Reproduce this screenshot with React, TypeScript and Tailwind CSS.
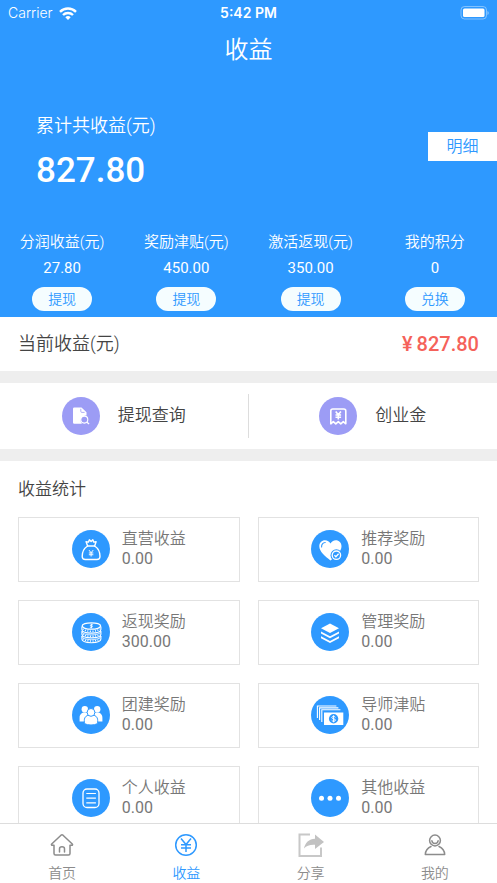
import React from 'react';

type IconProps = { className?: string };

const YuanMark = ({ x, y, s = 1 }: { x: number; y: number; s?: number }) => (
  <g transform={`translate(${x} ${y}) scale(${s})`} fill="none" stroke="currentColor">
    <path d="M-2.6 -4 L0 -0.6 L2.6 -4 M0 -0.6 V4 M-2.8 -0.4 H2.8 M-2.8 1.8 H2.8" />
  </g>
);

const QueryIcon = () => (
  <svg viewBox="0 0 38 38" className="size-[38px]">
    <circle cx="19" cy="19" r="19" fill="#9c9cf5" />
    <path d="M12.3 10.5h7.2l5 4.8v3.2a5 5 0 0 0-4.5 8.3h-7.7a1.3 1.3 0 0 1-1.3-1.3V11.8a1.3 1.3 0 0 1 1.3-1.3z" fill="#fff" />
    <path d="M18.8 11.8v2.6q0 1 1 1h2.8" fill="none" stroke="#9c9cf5" strokeWidth=".8" />
    <circle cx="22.3" cy="22.6" r="3.5" fill="none" stroke="#fff" strokeWidth="1.1" />
    <path d="M24.9 25.2l2.2 1.9" stroke="#fff" strokeWidth="1.3" />
  </svg>
);

const ReceiptIcon = () => (
  <svg viewBox="0 0 38 38" className="size-[38px] text-white">
    <circle cx="19" cy="19" r="19" fill="#9c9cf5" />
    <path
      d="M11.8 26.8V14a2 2 0 0 1 2-2h11a2 2 0 0 1 2 2v12.8l-2.5-2.2-2.5 2.2-2.5-2.2-2.5 2.2-2.5-2.2z"
      fill="none"
      stroke="#fff"
      strokeWidth="1.6"
      strokeLinejoin="round"
    />
    <g strokeWidth="1.6">
      <YuanMark x={19.3} y={18.4} />
    </g>
  </svg>
);

const Disc = ({ children }: { children: React.ReactNode }) => (
  <svg viewBox="0 0 38 38" className="size-[38px] shrink-0 text-white">
    <circle cx="19" cy="19" r="19" fill="#2e99ff" />
    {children}
  </svg>
);

const BagIcon = () => (
  <Disc>
    <g fill="none" stroke="#fff" strokeWidth="1.4" strokeLinejoin="round" strokeLinecap="round">
      <path d="M15.6 16C11.8 18.5 10.2 22.5 10.2 26.3c0 2.3 1 3.2 3.2 3.2h11.4c2.2 0 3.2-.9 3.2-3.2 0-3.8-1.6-7.8-5.4-10.3z" />
      <path d="M15.6 16l-1.5-4.3 2.3.4 1-2.3 1.7 1.7 1.7-1.7 1 2.3 2.3-.4-1.5 4.3" />
    </g>
    <g strokeWidth="1.2">
      <YuanMark x={19.1} y={23.3} s={0.8} />
    </g>
  </Disc>
);

const HeartIcon = () => (
  <Disc>
    <path d="M19.5 30.5C14 26 8.3 21.5 8.3 16.2c0-3.5 2.5-6 5.7-6 2.4 0 4.5 1.3 5.5 3.2 1-1.9 2.9-3.2 5.3-3.2 3.2 0 5.7 2.5 5.7 6 0 5.3-5.5 9.800-11 14.300z" fill="#fff" />
    <path d="M10.6 17c-.2-2.6 1.300-4.400 3.600-4.500" fill="none" stroke="#2e99ff" strokeWidth="1.1" strokeLinecap="round" />
    <circle cx="25.4" cy="25.2" r="5.9" fill="#2e99ff" />
    <circle cx="25.4" cy="25.2" r="4.2" fill="none" stroke="#fff" strokeWidth="1.3" />
    <path d="M23.4 25.3l1.500 1.500 2.700-3" fill="none" stroke="#fff" strokeWidth="1.3" />
  </Disc>
);

const CoinsIcon = () => (
  <Disc>
    <g fill="none" stroke="#fff">
      <ellipse cx="19.4" cy="13" rx="9.2" ry="3.2" strokeWidth="1.3" />
      <path d="M9.9 13.5v3c0 4.8 19 4.8 19 0v-3M9.9 18.3v3c0 4.8 19 4.8 19 0v-3M9.9 23.1v3c0 4.8 19 4.8 19 0v-3" strokeWidth="1.1" />
      <path d="M9.9 18.3c0 4.8 19 4.800 19 0M9.900 23.100c0 4.800 19 4.800 19 0" strokeWidth=".8" />
      <path d="M11 15.800c2 3.300 14.800 3.300 16.800 0M11 21c2 3.100 14.800 3.100 16.800 0M11 25.700c2 3.100 14.800 3.100 16.800 0" strokeWidth="1.500" strokeDasharray="1 1.500" />
      <path d="M20.9 11.9c-2.500-.8-3.500.8-1.500 1.100s1 1.900-1.500 1.100M19.400 10.800v4.400" strokeWidth=".9" />
    </g>
  </Disc>
);

const LayersIcon = () => (
  <Disc>
    <g fill="#fff">
      <path d="M19 10.5l9 4.700-9 4.700-9-4.700z" />
      <path d="M10 18.600l9 4.700 9-4.700v1.900l-9 4.700-9-4.700zM10 23.300l9 4.700 9-4.700v1.900l-9 4.700-9-4.700z" />
    </g>
  </Disc>
);

const TeamIcon = () => (
  <Disc>
    <g fill="#fff">
      <circle cx="12.8" cy="13.2" r="3.2" />
      <circle cx="25.2" cy="13.2" r="3.2" />
      <path d="M7.6 25.5v-3.700c0-3.300 2-5.300 5.200-5.300s5.200 2 5.200 5.300v3.700zM20 25.500v-3.700c0-3.300 2-5.300 5.200-5.300s5.200 2 5.200 5.300v3.700z" />
      <path d="M12.300 27.500v-3c0-3.700 2.600-5.700 6.700-5.700s6.700 2 6.700 5.700v3q-2.600 1.500-6.700 1.500t-6.700-1.500z" stroke="#2e99ff" strokeWidth="1" />
      <circle cx="19" cy="16.4" r="3.9" stroke="#2e99ff" strokeWidth="1" />
    </g>
  </Disc>
);

const CashIcon = () => (
  <Disc>
    <path d="M6.400 22V10h19M8.600 24V11.900h18.800M10.800 26V13.800h18.600" fill="none" stroke="#fff" strokeWidth="1.1" />
    <path d="M13 16.500h19.300V29H13z" fill="#fff" />
    <circle cx="22.6" cy="22.8" r="4.7" fill="#2e99ff" />
    <path d="M24.400 21.300c-1-1.500-3.600-1-3.600.3 0 1.600 3.700.8 3.700 2.500 0 1.400-3 1.700-3.800.2M22.600 19.300v7" fill="none" stroke="#fff" strokeWidth="1" />
  </Disc>
);

const ListIcon = () => (
  <Disc>
    <rect x="11" y="10" width="16" height="18.5" rx="4" fill="none" stroke="#fff" strokeWidth="1.3" />
    <path d="M14.300 14.500h9.600M14.300 19.200h9.600M14.300 23.900h9.600" stroke="#fff" strokeWidth="1.2" />
  </Disc>
);

const MoreIcon = () => (
  <Disc>
    <g fill="#fff">
      <circle cx="10.5" cy="19.3" r="2.5" />
      <circle cx="19" cy="19.3" r="2.5" />
      <circle cx="27.5" cy="19.3" r="2.5" />
    </g>
  </Disc>
);

const HomeTab = ({ className }: IconProps) => (
  <svg viewBox="0 0 26 26" className={className} fill="none" stroke="currentColor" strokeWidth="1.5" strokeLinejoin="round" strokeLinecap="round">
    <path d="M5 13.200H2.700q-.6-.6 0-1.200L12 3.200q1-.8 2 0l9.300 8.800q.6.600 0 1.200H21v8.300q0 1.500-1.500 1.500h-13Q5 23 5 21.500z" />
    <path d="M10.500 20v-3.200q0-2 2.500-2t2.500 2V20" />
  </svg>
);

const YuanTab = ({ className }: IconProps) => (
  <svg viewBox="0 0 26 26" className={className} fill="none" stroke="currentColor" strokeWidth="1.5">
    <circle cx="13" cy="13" r="10.3" />
    <path d="M8 6.500l5 6 5-6M13 12.500V20M8 12.700h10M8 16h10" />
  </svg>
);

const ShareTab = ({ className }: IconProps) => (
  <svg viewBox="0 0 26 26" className={className}>
    <path d="M12 2.500H1.500V24H23v-8.500" fill="none" stroke="#c8c8c8" strokeWidth="2" />
    <path d="M17 2.500l9 7.500-9 7v-4.200c-5-.3-8.500.8-11 3.700C7 11 11 7 17 6.800z" fill="#c2c2c2" />
  </svg>
);

const MineTab = ({ className }: IconProps) => (
  <svg viewBox="0 0 26 26" className={className} fill="none" stroke="currentColor" strokeWidth="1.5" strokeLinejoin="round" strokeLinecap="round">
    <circle cx="13" cy="8.5" r="5.4" />
    <path d="M9.900 8.700c.3 3.600 5.900 3.600 6.200 0" />
    <path d="M9 14.500c-3.500 1.500-5.500 4-5.700 8h19.400c-.2-4-2.200-6.500-5.700-8" />
  </svg>
);

const accounts = [
  { label: '分润收益(元)', value: '27.80', action: '提现' },
  { label: '奖励津贴(元)', value: '450.00', action: '提现' },
  { label: '激活返现(元)', value: '350.00', action: '提现' },
  { label: '我的积分', value: '0', action: '兑换' },
];

const stats = [
  { label: '直营收益', value: '0.00', Icon: BagIcon },
  { label: '推荐奖励', value: '0.00', Icon: HeartIcon },
  { label: '返现奖励', value: '300.00', Icon: CoinsIcon },
  { label: '管理奖励', value: '0.00', Icon: LayersIcon },
  { label: '团建奖励', value: '0.00', Icon: TeamIcon },
  { label: '导师津贴', value: '0.00', Icon: CashIcon },
  { label: '个人收益', value: '0.00', Icon: ListIcon },
  { label: '其他收益', value: '0.00', Icon: MoreIcon },
];

const tabs = [
  { label: '首页', Icon: HomeTab, active: false },
  { label: '收益', Icon: YuanTab, active: true },
  { label: '分享', Icon: ShareTab, active: false },
  { label: '我的', Icon: MineTab, active: false },
];

const StatusBar = () => (
  <div className="grid h-[26px] grid-cols-3 items-center px-2 font-['Inter','Noto_Sans_CJK_SC',sans-serif] text-sm">
    <div className="flex items-center gap-1.5">
      <span>Carrier</span>
      <svg viewBox="0 0 18 13" className="h-[13px] w-[18px]" fill="none" stroke="currentColor" strokeWidth="2.4">
        <path d="M1 4.800a11.500 11.500 0 0 1 16 0M4 8a7.200 7.200 0 0 1 10 0" />
        <path d="M9 13L6.300 10.200a3.900 3.900 0 0 1 5.400 0z" fill="currentColor" stroke="none" />
      </svg>
    </div>
    <span className="text-center font-semibold">5:42 PM</span>
    <svg viewBox="0 0 29 14" className="h-[14px] w-[29px] justify-self-end">
      <rect x="1" y=".5" width="25.5" height="12.5" rx="3.5" fill="none" stroke="#fff" strokeOpacity=".4" />
      <rect x="3" y="2.5" width="21.5" height="8.5" rx="1.5" fill="#fff" />
      <path d="M27.500 5v4q1.200-.6 1.200-2t-1.200-2z" fill="#fff" fillOpacity=".5" />
    </svg>
  </div>
);

const App = () => {
  return (
    <div className="flex h-screen flex-col bg-white font-['Roboto','Noto_Sans_CJK_SC',sans-serif] font-[350] text-[#444]">
      <main className="min-h-0 flex-1 overflow-y-auto [scrollbar-width:none]">
        <header className="bg-[#2e99ff] pb-1.5 text-white">
          <StatusBar />
          <h1 className="text-center text-2xl leading-[48px] font-[350]">收益</h1>

          {/* Total */}
          <div className="flex items-center justify-between pt-[39px] pl-9">
            <div>
              <p className="text-lg leading-[26px]">累计共收益(元)</p>
              <p className="mt-3 text-[35px] leading-10 font-medium">827.80</p>
            </div>
            <button className="mb-3 h-[29px] w-[69px] bg-white text-base leading-[29px] text-[#2e99ff]">明细</button>
          </div>

          {/* Accounts */}
          <div className="mt-[41px] grid grid-cols-4 text-center text-[15px] leading-5">
            {accounts.map((a) => (
              <div key={a.label}>
                <p className="whitespace-nowrap">{a.label}</p>
                <p className="mt-1.5 font-normal">{a.value}</p>
                <button className="mt-[9px] h-6 w-[60px] rounded-full bg-[#f5fdff] text-sm text-[#2e99ff]">{a.action}</button>
              </div>
            ))}
          </div>
        </header>

        <section className="flex h-[54px] items-center justify-between px-[18px]">
          <h2 className="text-lg font-[350]">当前收益(元)</h2>
          <p className="flex items-center gap-1 text-xl font-medium text-[#f5625a]">
            <span>¥</span>
            <span>827.80</span>
          </p>
        </section>

        <nav className="grid grid-cols-2 border-y-12 border-[#eee] py-[11px] text-[17px]">
          <a href="#query" className="flex h-11 items-center justify-center gap-[18px] border-r border-[#ddd]">
            <QueryIcon />
            提现查询
          </a>
          <a href="#fund" className="flex h-11 items-center justify-center gap-[18px]">
            <ReceiptIcon />
            创业金
          </a>
        </nav>

        {/* Statistics */}
        <section className="px-[18px] pb-[18px]">
          <h2 className="text-[17px] leading-[56px] font-[350]">收益统计</h2>
          <div className="grid grid-cols-2 gap-[18px] text-base leading-5 text-[#777]">
            {stats.map(({ label, value, Icon }) => (
              <div key={label} className="flex h-[65px] items-center justify-center gap-3 border border-[#e2e2e2] pb-px">
                <Icon />
                <div>
                  <p>{label}</p>
                  <p className="font-normal">{value}</p>
                </div>
              </div>
            ))}
          </div>
        </section>
      </main>

      <nav className="grid grid-cols-4 border-t border-[#ddd] bg-white">
        {tabs.map(({ label, Icon, active }) => (
          <a
            key={label}
            href="#tab"
            className={`flex flex-col items-center pt-2 text-sm leading-5 ${active ? 'text-[#2e99ff]' : 'text-[#8c8c8c]'}`}
          >
            <Icon className="size-[26px]" />
            <span className="mt-[5px]">{label}</span>
          </a>
        ))}
      </nav>
    </div>
  );
};

export default App;
